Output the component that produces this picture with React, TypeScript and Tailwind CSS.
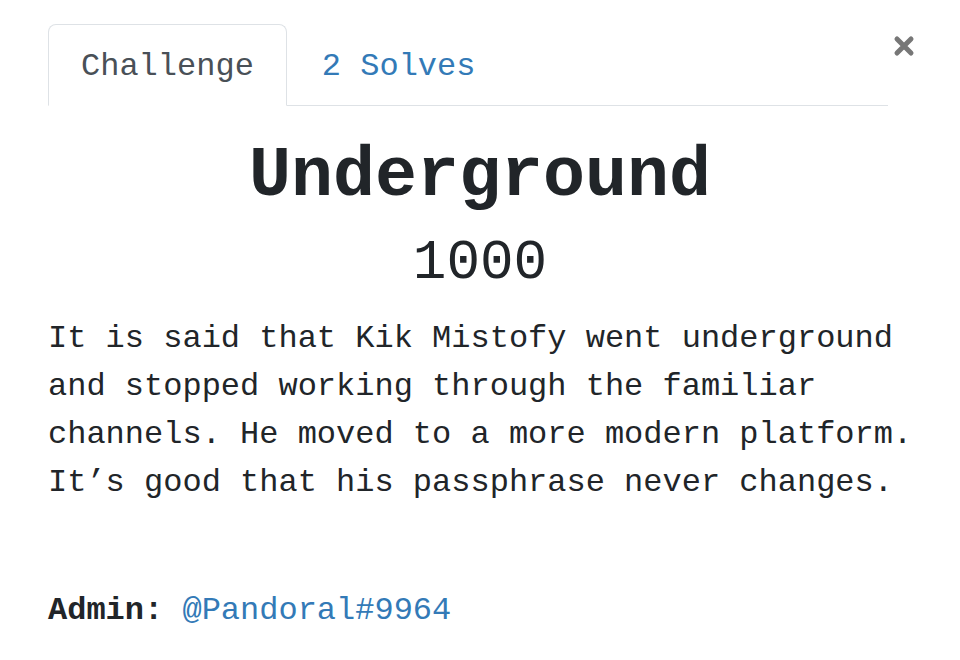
import React from "react";

const MONO = "font-['Liberation_Mono','Courier_New',monospace]";

export default function App() {
  return (
    <div className={`min-h-[660px] w-[960px] bg-white ${MONO} text-[#212529]`}>
      <div className="pl-[48px] pr-[40px] pt-[24px]">
        {/* Tabs + close */}
        <div className="flex items-start pr-[4px]">
          <div className="flex flex-1 border-b border-[#dee2e6]">
            <div className="-mb-px rounded-t-[8px] border border-[#dee2e6] border-b-white bg-white px-[32px] pb-[14px] pt-[18px] text-[32px] leading-[48px] text-[#495057]">
              Challenge
            </div>
            <div className="pl-[35px] pr-[32px] pb-[14px] pt-[19px] text-[32px] leading-[48px] text-[#337ab7]">
              2 Solves
            </div>
          </div>
          <button className="ml-[3px] mt-[10px] flex h-[24px] w-[25px] items-center justify-center">
            <svg width="22" height="22" viewBox="0 0 22 22">
              <path
                d="M4 4 L18 18 M18 4 L4 18"
                stroke="#777"
                strokeWidth="5"
                strokeLinecap="round"
              />
            </svg>
          </button>
        </div>

        {/* Title + value */}
        <h3 className="mt-[29px] pr-[8px] text-center text-[70px] font-bold leading-[84px]">
          Underground
        </h3>
        <div className="mt-[11px] pr-[8px] text-center text-[56px] leading-[67px]">1000</div>

        {/* Description */}
        <p className="mt-[18px] text-[32px] leading-[48px]">
          It is said that Kik Mistofy went underground and stopped working through the
          familiar channels. He moved to a more modern platform. It’s good that his
          passphrase never changes.
        </p>

        <div className="mt-[80px] text-[32px] leading-[48px]">
          <span className="font-bold">Admin:</span>{" "}
          <a className="text-[#337ab7]">@Pandoral#9964</a>
        </div>
      </div>
    </div>
  );
}
